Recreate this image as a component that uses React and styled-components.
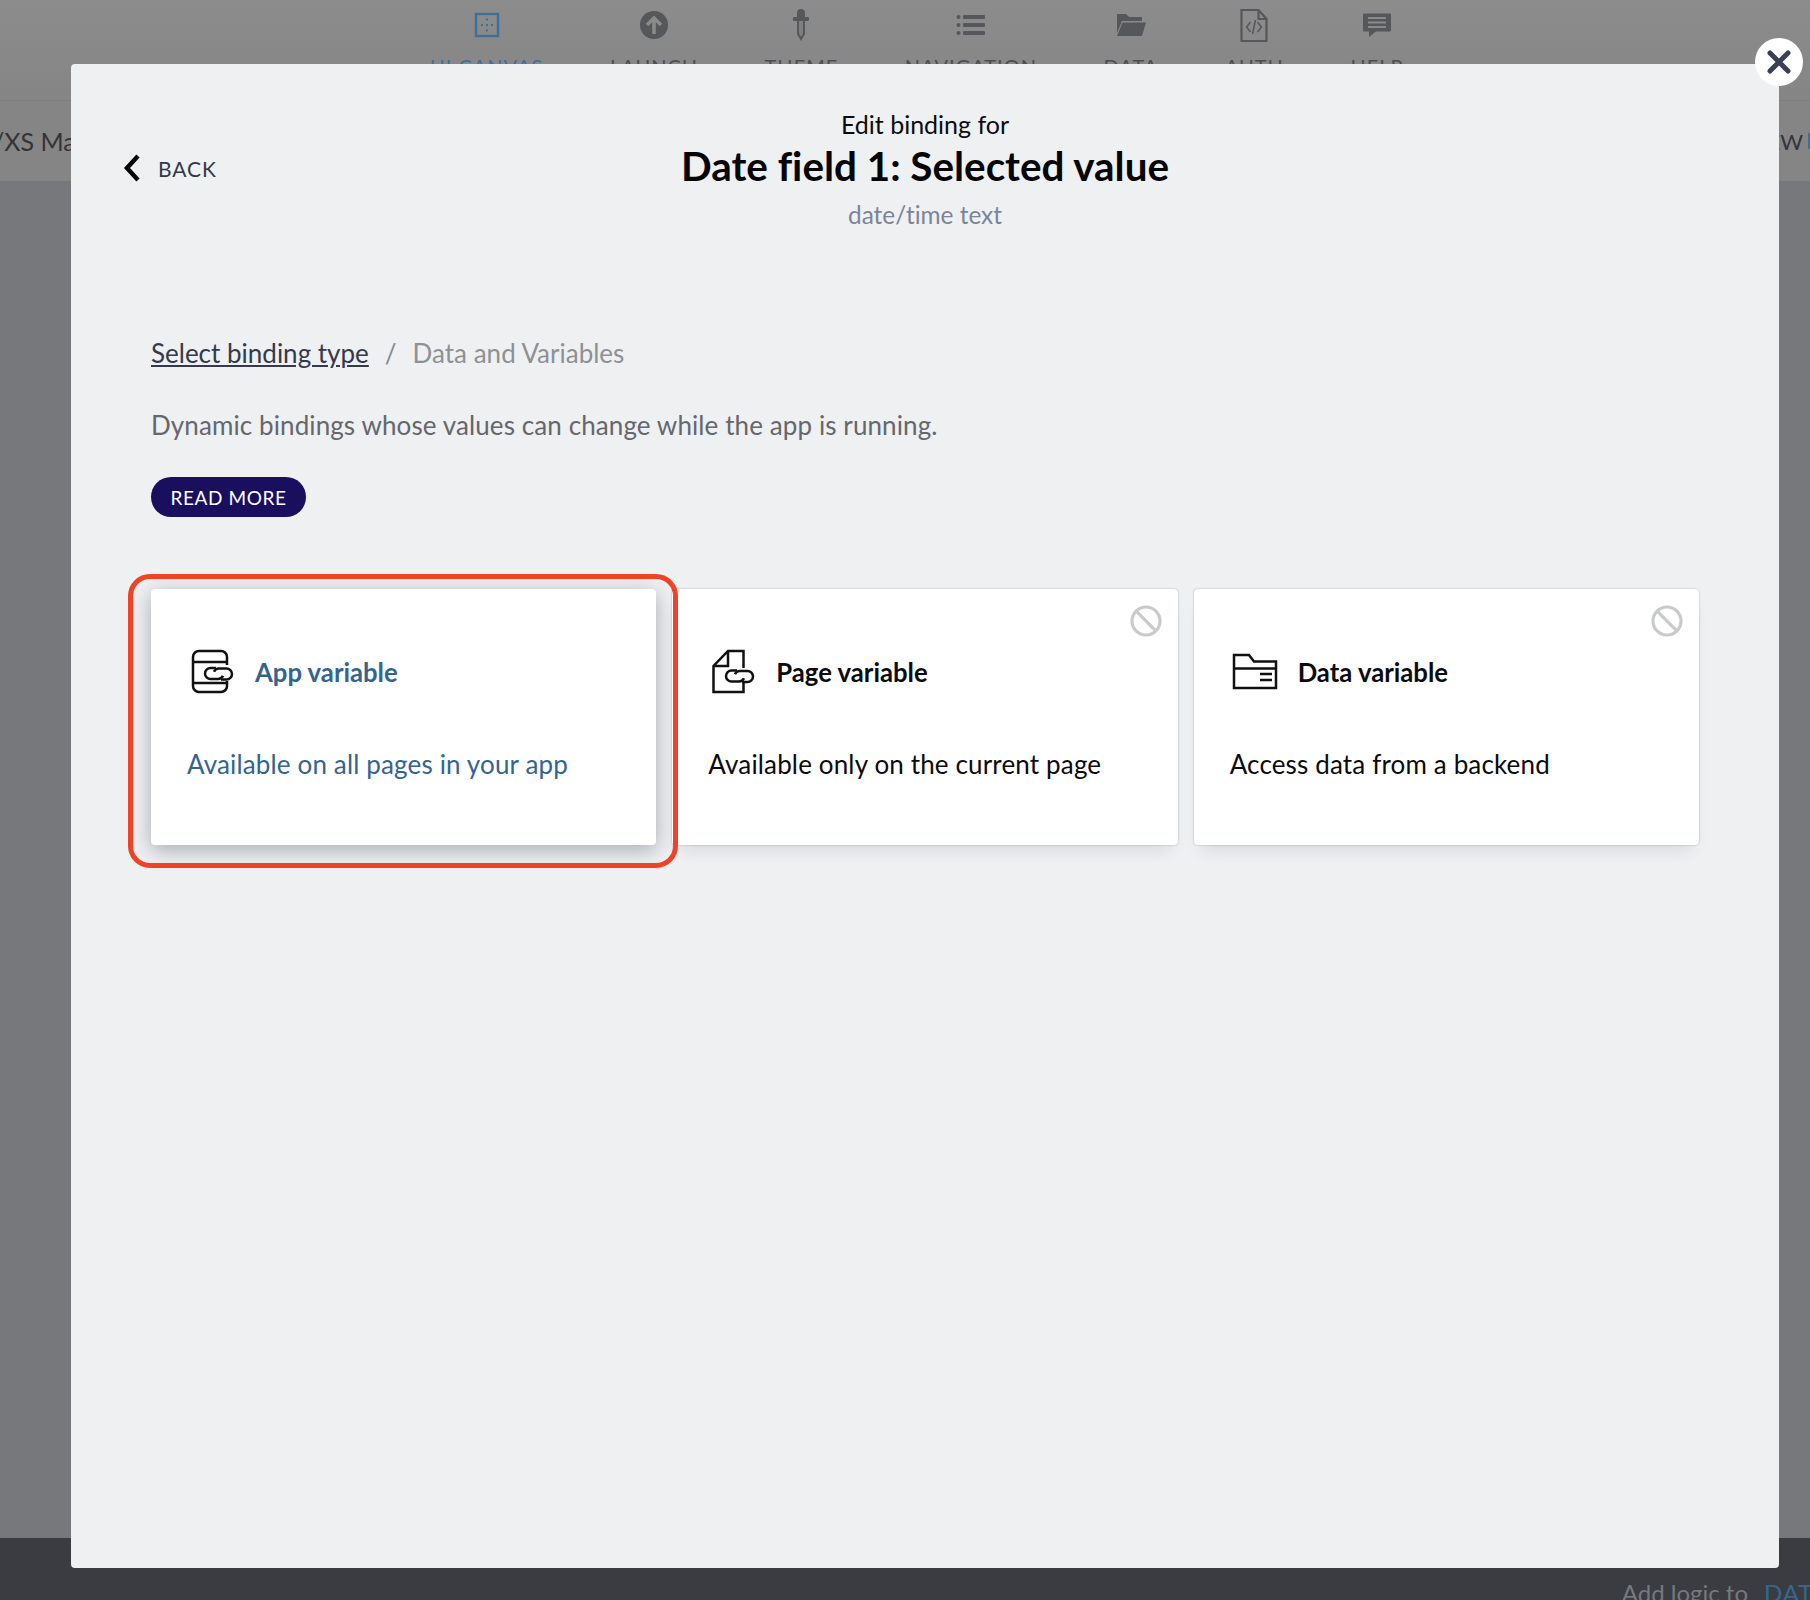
import React from "react";
import styled, { createGlobalStyle } from "styled-components";

const Global = createGlobalStyle`
  html, body { margin: 0; padding: 0; background: #77787c; }
  body { font-family: "Lato", "Liberation Sans", sans-serif; font-variant-ligatures: none; }
  * { box-sizing: border-box; }
`;

const Page = styled.div`
  position: relative;
  width: 1810px;
  height: 1600px;
  overflow: hidden;
  display: flex;
  flex-direction: column;
`;
const TopNav = styled.nav`
  height: 100px;
  flex: none;
  background: linear-gradient(#8c8c8d, #858586);
  display: flex;
  gap: 66.500px;
  padding: 7px 0 0 430px;
`;
const NavItem = styled.div`
  display: flex;
  flex-direction: column;
  align-items: center;
  gap: 11px;
  font-size: 20px;
  letter-spacing: 1px;
  text-transform: uppercase;
  white-space: nowrap;
  color: ${(p) => (p.$active ? "#3e7096" : "#4c4d50")};
`;
const NavIcon = styled.svg`
  width: 40px;
  height: 36px;
  display: block;
`;
const SubBar = styled.div`
  height: 81px;
  flex: none;
  background: #858586;
  border-top: 1px solid #7e7e7f;
  display: flex;
  align-items: center;
  justify-content: space-between;
  font-size: 25px;
  color: #333438;
`;
const SubLeft = styled.span`
  margin-left: -7px;
`;
const SubRight = styled.span`
  display: flex;
  align-items: center;
  gap: 5px;
  font-size: 22px;
`;
const BlueMark = styled.i`
  display: block;
  width: 2px;
  height: 16px;
  background: #3e7096;
`;
const Main = styled.div`
  flex: 1;
  background: #77787c;
`;
const BottomBar = styled.div`
  height: 62px;
  flex: none;
  background: #3a3c42;
  display: flex;
  justify-content: flex-end;
  gap: 16px;
  font-size: 24px;
  color: #77787c;
  padding: 40px 0 0 0;
  white-space: nowrap;
`;
const DataLink = styled.span`
  color: #34688f;
  width: 46px;
  overflow: hidden;
  letter-spacing: 1px;
`;
const Modal = styled.div`
  position: absolute;
  left: 71px;
  top: 64px;
  width: 1708px;
  height: 1504px;
  background: #eff0f2;
  border-radius: 4px;
  padding: 0 80px;
`;
const CloseButton = styled.button`
  position: absolute;
  top: -26px;
  right: -24px;
  width: 48px;
  height: 48px;
  border: none;
  border-radius: 50%;
  background: #fff;
  padding: 0;
  display: flex;
  align-items: center;
  justify-content: center;
`;
const Header = styled.header`
  height: 206px;
  display: flex;
  flex-direction: column;
  align-items: center;
  padding-top: 46px;
`;
const BackLink = styled.a`
  position: absolute;
  left: 52px;
  top: 90px;
  display: flex;
  align-items: center;
  gap: 17px;
  font-size: 21px;
  letter-spacing: 0.9px;
  color: #333849;
`;
const EditFor = styled.div`
  font-size: 25px;
  line-height: 28px;
  color: #0c0c0e;
`;
const Title = styled.h1`
  margin: 4px 0 0;
  font-size: 40.400px;
  line-height: 48px;
  font-weight: 700;
  color: #050507;
`;
const DataType = styled.div`
  margin-top: 11px;
  font-size: 24.400px;
  line-height: 28px;
  color: #7b849b;
`;
const Crumbs = styled.div`
  display: flex;
  gap: 16px;
  font-size: 26px;
  line-height: 30px;
  margin-top: 68px;
`;
const CrumbLink = styled.a`
  color: #343a4c;
  text-decoration: underline;
`;
const CrumbSep = styled.span`
  color: #85878e;
`;
const CrumbCurrent = styled.span`
  color: #8e9096;
`;
const Description = styled.p`
  margin: 42px 0 0;
  font-size: 26px;
  letter-spacing: 0.1px;
  line-height: 30px;
  color: #65676c;
`;
const ReadMore = styled.button`
  display: block;
  margin-top: 37px;
  width: 155px;
  height: 40px;
  border: none;
  border-radius: 20px;
  background: #1a0f5e;
  color: #fff;
  font: 400 19px "Lato", sans-serif;
  letter-spacing: 0.6px;
  padding: 0;
`;
const Cards = styled.div`
  margin-top: 72px;
  display: grid;
  grid-template-columns: repeat(3, 1fr);
  gap: 16px;
`;
const Card = styled.div`
  position: relative;
  height: 256px;
  background: #fff;
  border-radius: 4px;
  padding: 56px 36px 0;
  color: ${(p) => (p.$selected ? "#34648f" : "#0b0b0d")};
  box-shadow: ${(p) =>
    p.$selected
      ? "0 5px 20px rgba(60, 66, 90, 0.4)"
      : "0 0 2px rgba(60,66,90,0.4), 0 12px 16px -8px rgba(60, 66, 90, 0.14)"};
`;
const CardHead = styled.div`
  display: flex;
  align-items: center;
  gap: 20px;
  height: 54px;
`;
const CardIcon = styled.svg`
  width: 48px;
  height: 48px;
  flex: none;
  display: block;
`;
const CardTitle = styled.div`
  font-size: 25.700px;
  font-weight: 700;
`;
const CardText = styled.div`
  margin-top: 50px;
  font-size: 26px;
  letter-spacing: 0.15px;
  line-height: 30px;
`;
const BanIcon = styled.svg`
  position: absolute;
  top: 16px;
  right: 16px;
  width: 32px;
  height: 32px;
`;
const Highlight = styled.div`
  position: absolute;
  left: 57px;
  top: 510px;
  width: 550px;
  height: 294px;
  border: 5px solid #f04227;
  border-radius: 22px;
  pointer-events: none;
`;

const Link = ({ x = 0, y = 0 }) => (
  <g transform={`translate(${x} ${y})`} fill="none" stroke="#111" strokeWidth="2.500">
    <path d="M12 1.500H6.500a5.500 5.500 0 0 0 0 11H14a5.500 5.500 0 0 0 5-3.200" />
    <path d="M17 13h5.500a5.500 5.500 0 0 0 0-11H15a5.500 5.500 0 0 0-5 3.200" />
  </g>
);

const Ban = () => (
  <BanIcon viewBox="0 0 32 32" fill="none" stroke="#c9cacb" strokeWidth="3.200">
    <circle cx="16" cy="16" r="14" />
    <path d="M6.200 6.200l19.600 19.600" />
  </BanIcon>
);

const dark = "#56575a";
const navItems = [
  ["UI Canvas", true, (
    <g>
      <rect x="9" y="7" width="22" height="22" fill="none" stroke="#3e7096" strokeWidth="2.400" />
      <path d="M20 11.500v2M20 17v2M20 22.500v2M14 18h2M24 18h2" stroke="#3e7096" strokeWidth="2" />
    </g>
  )],
  ["Launch", false, (
    <g>
      <circle cx="20" cy="18" r="14" fill={dark} />
      <path d="M20 27V12M13 18l7-7 7 7" fill="none" stroke="#8a8a8b" strokeWidth="3.600" />
    </g>
  )],
  ["Theme", false, (
    <g fill={dark}>
      <path d="M16 11V6a4 4 0 0 1 8 0v5z" />
      <rect x="12" y="10" width="16" height="4" rx="1" />
      <path d="M16 14h8v13l-4 7-4-7z" />
      <path d="M18 14h4v12.500l-2 3.500-2-3.500z" fill="#7f7f80" />
    </g>
  )],
  ["Navigation", false, (
    <g fill={dark}>
      <circle cx="7.500" cy="10" r="2" />
      <circle cx="7.500" cy="18" r="2" />
      <circle cx="7.500" cy="26" r="2" />
      <rect x="12" y="8" width="22" height="4" rx="1" />
      <rect x="12" y="16" width="22" height="4" rx="1" />
      <rect x="12" y="24" width="22" height="4" rx="1" />
    </g>
  )],
  ["Data", false, (
    <g fill={dark}>
      <path d="M6 26V7h9l3 3h13v4H11z" />
      <path d="M11.500 15.500H35L31 29H6z" />
    </g>
  )],
  ["Auth", false, (
    <g fill="none" stroke={dark} strokeWidth="2.200">
      <path d="M7.500 3h17l8 9v22h-25z" />
      <path d="M24.500 3v9h8" />
      <path d="M16.500 15l-4 5 4 5M23.500 15l4 5-4 5M21.500 13l-3 14" strokeWidth="1.500" />
    </g>
  )],
  ["Help", false, (
    <g fill={dark}>
      <path d="M7 6.500h26a1 1 0 0 1 1 1v16a1 1 0 0 1-1 1H19l-7 5.500v-5.500H7a1 1 0 0 1-1-1v-16a1 1 0 0 1 1-1z" />
      <path d="M11 11h18M11 15.500h18M11 20h18" stroke="#8a8a8b" strokeWidth="2" />
    </g>
  )],
];

const cards = [
  {
    title: "App variable",
    text: "Available on all pages in your app",
    selected: true,
    icon: (
      <>
        <path
          d="M40 17V9a6 6 0 0 0-6-6H12a6 6 0 0 0-6 6v29a6 6 0 0 0 6 6h22a6 6 0 0 0 6-6v-5M6 14h34M6 35h34"
          fill="none"
          stroke="#111"
          strokeWidth="2.500"
        />
        <Link x={17} y={18.500} />
      </>
    ),
  },
  {
    title: "Page variable",
    text: "Available only on the current page",
    icon: (
      <>
        <path
          d="M35.500 20V3H20L5.500 18v26h30V34M20 3v15H5.500"
          fill="none"
          stroke="#111"
          strokeWidth="2.500"
        />
        <Link x={17} y={21} />
      </>
    ),
  },
  {
    title: "Data variable",
    text: "Access data from a backend",
    icon: (
      <path
        d="M4 7h15l5 6.500h22V40H4zM4 20.500h42M30 26h12M30 32h12"
        fill="none"
        stroke="#111"
        strokeWidth="2.500"
      />
    ),
  },
];

export default function App() {
  return (
    <Page>
      <Global />
      <TopNav>
        {navItems.map(([label, active, icon]) => (
          <NavItem key={label} $active={active}>
            <NavIcon viewBox="0 0 40 36">{icon}</NavIcon>
            {label}
          </NavItem>
        ))}
      </TopNav>
      <SubBar>
        <SubLeft>/XS Manager</SubLeft>
        <SubRight>
          VIEW
          <BlueMark />
        </SubRight>
      </SubBar>
      <Main />
      <BottomBar>
        <span>Add logic to</span>
        <DataLink>DATA</DataLink>
      </BottomBar>
      <Modal>
        <CloseButton aria-label="Close">
          <svg width="26" height="26" viewBox="0 0 26 26" stroke="#3a3f55" strokeWidth="5" strokeLinecap="round">
            <path d="M4 4l18 18M22 4L4 22" />
          </svg>
        </CloseButton>
        <BackLink>
          <svg width="18" height="28" viewBox="0 0 18 28" fill="none" stroke="#050507" strokeWidth="4.500">
            <path d="M15 2L4 14l11 12" />
          </svg>
          BACK
        </BackLink>
        <Header>
          <EditFor>Edit binding for</EditFor>
          <Title>Date field 1: Selected value</Title>
          <DataType>date/time text</DataType>
        </Header>
        <Crumbs>
          <CrumbLink>Select binding type</CrumbLink>
          <CrumbSep>/</CrumbSep>
          <CrumbCurrent>Data and Variables</CrumbCurrent>
        </Crumbs>
        <Description>Dynamic bindings whose values can change while the app is running.</Description>
        <ReadMore>READ MORE</ReadMore>
        <Cards>
          {cards.map((c) => (
            <Card key={c.title} $selected={c.selected}>
              {!c.selected && <Ban />}
              <CardHead>
                <CardIcon viewBox="0 0 48 48">{c.icon}</CardIcon>
                <CardTitle>{c.title}</CardTitle>
              </CardHead>
              <CardText>{c.text}</CardText>
            </Card>
          ))}
        </Cards>
        <Highlight />
      </Modal>
    </Page>
  );
}
